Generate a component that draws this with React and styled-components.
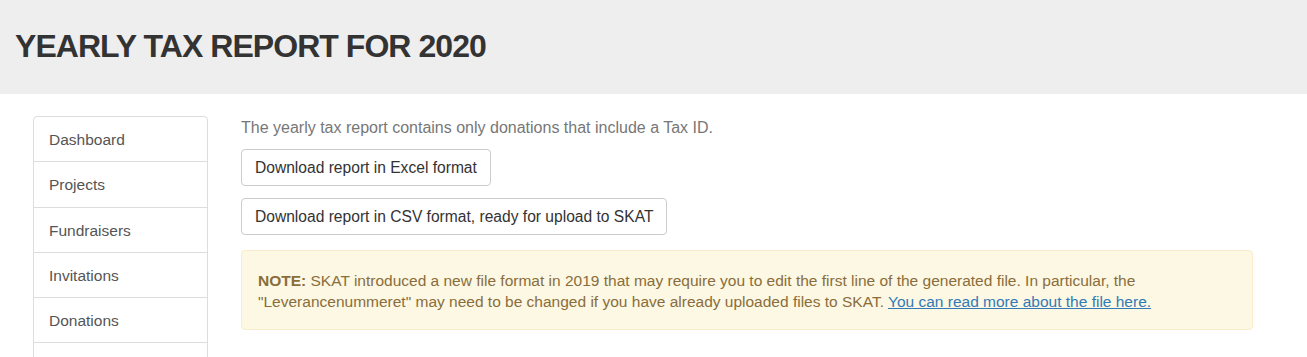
import React from "react";
import styled, { createGlobalStyle } from "styled-components";

const GlobalStyle = createGlobalStyle`
  body {
    margin: 0;
    background: #fff;
    font-family: "Liberation Sans", Arial, sans-serif;
    color: #333;
  }
`;

const navItems = ["Dashboard", "Projects", "Fundraisers", "Invitations", "Donations", "Settings"];

const App = () => {
  return (
    <>
      <GlobalStyle />
      <Header>
        <Title>YEARLY TAX REPORT FOR 2020</Title>
      </Header>
      <Page>
        <Sidebar>
          {navItems.map((item) => (
            <NavItem key={item} href="#">
              {item}
            </NavItem>
          ))}
        </Sidebar>
        <Content>
          <Lead>The yearly tax report contains only donations that include a Tax ID.</Lead>
          <Button>Download report in Excel format</Button>
          <Button>Download report in CSV format, ready for upload to SKAT</Button>
          <Alert>
            <strong>NOTE:</strong> SKAT introduced a new file format in 2019 that may require you to
            edit the first line of the generated file. In particular, the "Leverancenummeret" may
            need to be changed if you have already uploaded files to SKAT.{" "}
            <AlertLink href="#">You can read more about the file here.</AlertLink>
          </Alert>
        </Content>
      </Page>
    </>
  );
};

export default App;

const Header = styled.header`
  background: #eeeeee;
  height: 94px;
  display: flex;
  align-items: center;
  padding: 0 15px;
`;

const Title = styled.h1`
  margin: -2px 0 0;
  font-size: 32px;
  font-weight: 700;
  color: #333;
  letter-spacing: -0.95px;
`;

const Page = styled.div`
  display: flex;
  align-items: flex-start;
  gap: 33px;
  padding: 22px 54px 0 33px;
`;

const Sidebar = styled.nav`
  width: 175px;
  flex-shrink: 0;
  display: flex;
  flex-direction: column;
`;

const NavItem = styled.a`
  display: block;
  padding: 11px 15px 9px;
  line-height: 24.3px;
  font-size: 15.5px;
  color: #555;
  text-decoration: none;
  background: #fff;
  border: 1px solid #ddd;
  margin-bottom: -1px;

  &:first-child {
    border-top-left-radius: 4px;
    border-top-right-radius: 4px;
  }
`;

const Content = styled.main`
  flex: 1;
  display: flex;
  flex-direction: column;
  align-items: flex-start;
`;

const Lead = styled.p`
  margin: 1px 0 10px;
  font-size: 16px;
  line-height: 22px;
  color: #777;
`;

const Button = styled.button`
  font-family: inherit;
  font-size: 15.6px;
  line-height: 21px;
  color: #333;
  background: #fff;
  border: 1px solid #ccc;
  border-radius: 4px;
  padding: 7px 13px;
  margin-bottom: 12px;
  cursor: pointer;
`;

const Alert = styled.div`
  align-self: stretch;
  margin-top: 3px;
  padding: 19px 16px 17px;
  font-size: 15.5px;
  line-height: 21px;
  color: #8a6d3b;
  background: #fcf8e3;
  border: 1px solid #faebcc;
  border-radius: 4px;
`;

const AlertLink = styled.a`
  color: #337ab7;
  text-decoration: underline;
`;
